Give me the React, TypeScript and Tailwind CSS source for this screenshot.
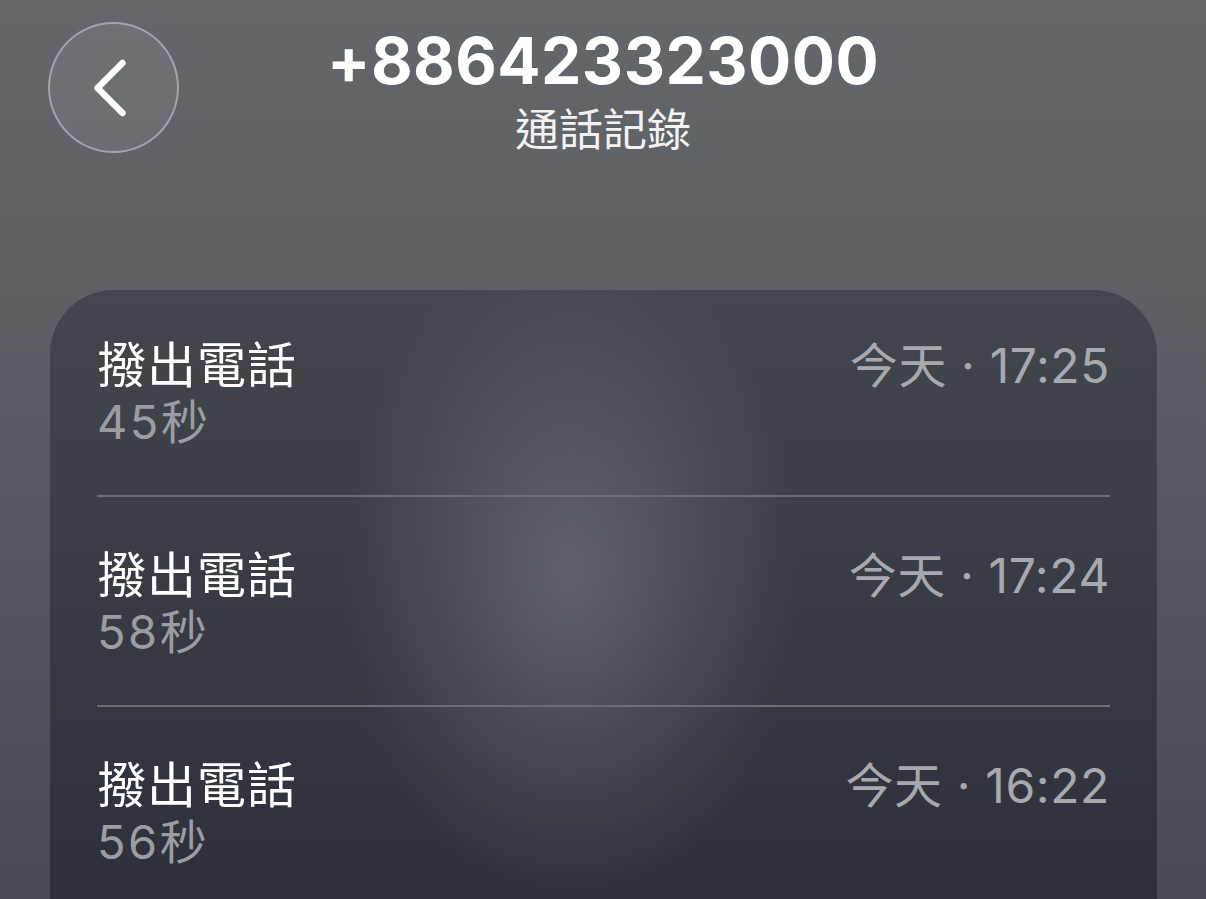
import { ChevronLeft } from "lucide-react";

// 通話記錄列
interface CallRow {
  label: string;
  duration: string;
  time: string;
}

const calls: CallRow[] = [
  { label: "撥出電話", duration: "45秒", time: "今天 · 17:25" },
  { label: "撥出電話", duration: "58秒", time: "今天 · 17:24" },
  { label: "撥出電話", duration: "56秒", time: "今天 · 16:22" },
];

const font = "font-['Inter','Noto_Sans_CJK_TC',sans-serif]";

export default function App() {
  return (
    <div
      className={`${font} w-[1206px] h-[899px] overflow-hidden bg-[linear-gradient(180deg,#63676b_0%,#5c6166_30%,#52545b_70%,#4b4952_100%)] pt-[22px]`}
    >
      {/* header */}
      <header className="grid grid-cols-[1fr_auto_1fr] items-start">
        <div className="pl-[48px]">
          <button
            aria-label="返回"
            className="w-[131px] h-[131px] rounded-full border-2 border-[#a3acb5]/90 bg-white/[0.07] flex items-center justify-center text-white"
          >
            <ChevronLeft size={100} strokeWidth={1.55} className="-ml-[8px]" />
          </button>
        </div>
        <div className="flex flex-col items-center pt-[7px]">
          <h1 className="text-[64px] leading-[64px] font-bold text-white tracking-[0.5px]">
            +886423323000
          </h1>
          <p className="mt-[13px] text-[44px] leading-[48px] text-[#f2f2f2]">
            通話記錄
          </p>
        </div>
        <div />
      </header>

      {/* list card */}
      <section
        aria-label="通話記錄"
        className="mt-[136px] ml-[50px] mr-[49px] h-[700px] rounded-t-[64px] bg-[radial-gradient(ellipse_230px_330px_at_47%_40%,rgba(110,110,116,0.75),rgba(110,110,116,0)_100%),linear-gradient(180deg,#42474d_0%,#383b44_45%,#2a2c39_100%)] px-[47px]"
      >
        {calls.map((c, i) => (
          <div key={i}>
            {i > 0 && <div className="h-[2px] bg-[#6b6e75]" />}
            <div
              className={`flex justify-between pb-[45px] ${i === 0 ? "pt-[48px]" : "pt-[51px]"}`}
            >
              <div className="flex flex-col">
                <span className="text-[49px] leading-[56px] text-white tracking-[1px]">
                  {c.label}
                </span>
                <span className="text-[47px] leading-[56px] text-[#9b9da3] tracking-[2.5px]">
                  {c.duration}
                </span>
              </div>
              <span className="text-[48px] leading-[56px] text-[#a7a9ae] tracking-[0.6px]">
                {c.time}
              </span>
            </div>
          </div>
        ))}
      </section>
    </div>
  );
}
